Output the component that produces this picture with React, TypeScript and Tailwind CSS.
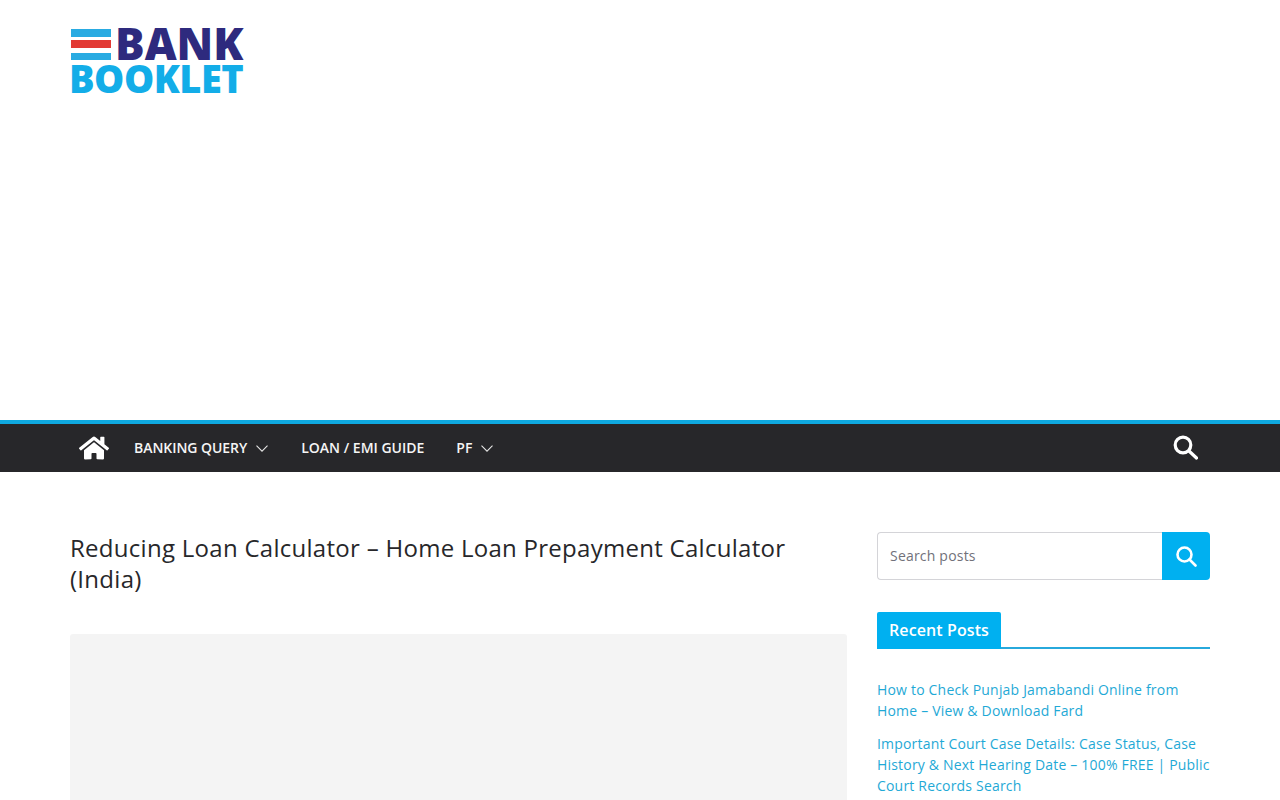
import React from 'react';

const posts = [
  'How to Check Punjab Jamabandi Online from Home – View & Download Fard',
  'Important Court Case Details: Case Status, Case History & Next Hearing Date – 100% FREE | Public Court Records Search',
];

const Chevron = () => (
  <svg width="12" height="7" viewBox="0 0 12 7" fill="none" stroke="#e5e5e5" strokeWidth="1.1">
    <path d="M0.5 0.7 6 6.2 11.5 0.7" />
  </svg>
);

const Logo = () => (
  <div className="w-[173px] font-extrabold">
    <div className="flex h-[32px] items-start">
      <div className="flex flex-col w-[40px] shrink-0 mt-px ml-px mr-[4px]">
        <div className="h-[8px] bg-[#29abe2]" />
        <div className="h-[8px] mt-[3px] bg-[#e23a34]" />
        <div className="h-[7px] mt-[5px] bg-[#29abe2]" />
      </div>
      <span className="text-[44px] leading-[31px] text-[#2e2a7e]">BANK</span>
    </div>
    <div className="mt-[5px] -ml-px h-[27px] text-[38px] leading-[27px] text-[#13ade8] tracking-[-0.5px] whitespace-nowrap">
      BOOKLET
    </div>
  </div>
);

export default function App() {
  return (
    <div className="h-screen overflow-hidden bg-white font-['Open_Sans',sans-serif] text-[#27272a]">
      <header className="h-[420px] px-[70px] pt-[28px]">
        <Logo />
      </header>

      {/* NAV */}
      <nav className="h-[52px] bg-[#27272a] border-t-4 border-[#0fa9e0]">
        <div className="flex items-center h-full px-[70px]">
          <svg className="ml-[9px] mr-[25px]" width="30" height="26" viewBox="0 0 576 512" fill="#fff" preserveAspectRatio="none">
            <path d="M280.37 148.26 96 300.11V464a16 16 0 0 0 16 16l112.06-.29a16 16 0 0 0 15.92-16V368a16 16 0 0 1 16-16h64a16 16 0 0 1 16 16v95.64a16 16 0 0 0 16 16.05L464 480a16 16 0 0 0 16-16V300L295.67 148.26a12.19 12.19 0 0 0-15.3 0zM571.6 251.47 488 182.56V44.05a12 12 0 0 0-12-12h-56a12 12 0 0 0-12 12v72.61L318.47 43a48 48 0 0 0-61 0L4.34 251.47a12 12 0 0 0-1.6 16.9l25.5 31A12 12 0 0 0 45.15 301l235.22-193.74a12.19 12.19 0 0 1 15.3 0L530.9 301a12 12 0 0 0 16.9-1.6l25.5-31a12 12 0 0 0-1.7-16.93z" />
          </svg>
          <div className="flex items-center text-sm font-semibold text-[#f5f5f5]">
            <span className="tracking-[-0.05px]">BANKING QUERY</span>
            <span className="ml-[9px]"><Chevron /></span>
            <span className="ml-[33px]">LOAN / EMI GUIDE</span>
            <span className="ml-[32px]">PF</span>
            <span className="ml-[9px]"><Chevron /></span>
          </div>
          <svg className="ml-auto mr-[12px] -mt-px" width="25" height="25" viewBox="0 0 25 25" fill="none" stroke="#fff" strokeWidth="3.2">
            <circle cx="10" cy="10" r="7.8" />
            <path d="M16 16l7.5 7" strokeLinecap="round" />
          </svg>
        </div>
      </nav>

      <main className="flex gap-[30px] px-[70px] pt-[60px]">
        {/* CONTENT */}
        <section className="w-[777px] shrink-0">
          <h1 className="text-2xl leading-[31px] tracking-[0.28px] font-normal text-[#27272a]">
            Reducing Loan Calculator – Home Loan Prepayment Calculator (India)
          </h1>
          <div className="mt-[40px] h-[400px] rounded-t-[3px] bg-[#f4f4f4]" />
        </section>

        {/* SIDEBAR */}
        <aside className="w-[333px] shrink-0">
          <div className="flex h-[48px]">
            <div className="flex-1 flex items-center pl-3 text-sm tracking-[0.2px] text-[#71717a] border border-[#d4d4d8] border-r-0 rounded-l-[4px]">
              Search posts
            </div>
            <div className="w-[48px] flex items-center justify-center bg-[#00b0f0] rounded-r-[4px]">
              <svg width="21" height="21" viewBox="0 0 21 21" fill="none" stroke="#fff" strokeWidth="2.6">
                <circle cx="8.5" cy="8.5" r="7" />
                <path d="M13.5 13.5l6 6" strokeLinecap="round" />
              </svg>
            </div>
          </div>

          <div className="flex mt-[32px] border-b-2 border-[#27a9dc]">
            <h3 className="-mb-[2px] h-[37px] px-3 bg-[#00b0f0] rounded-t-[2px] text-base tracking-[0.1px] leading-[36px] font-semibold text-white">
              Recent Posts
            </h3>
          </div>

          <ul className="mt-[30px] -mr-[3px] flex flex-col gap-3 text-sm leading-[21px] tracking-[0.19px] text-[#1fa9d6]">
            {posts.map(p => (
              <li key={p}>{p}</li>
            ))}
          </ul>
        </aside>
      </main>
    </div>
  );
}
